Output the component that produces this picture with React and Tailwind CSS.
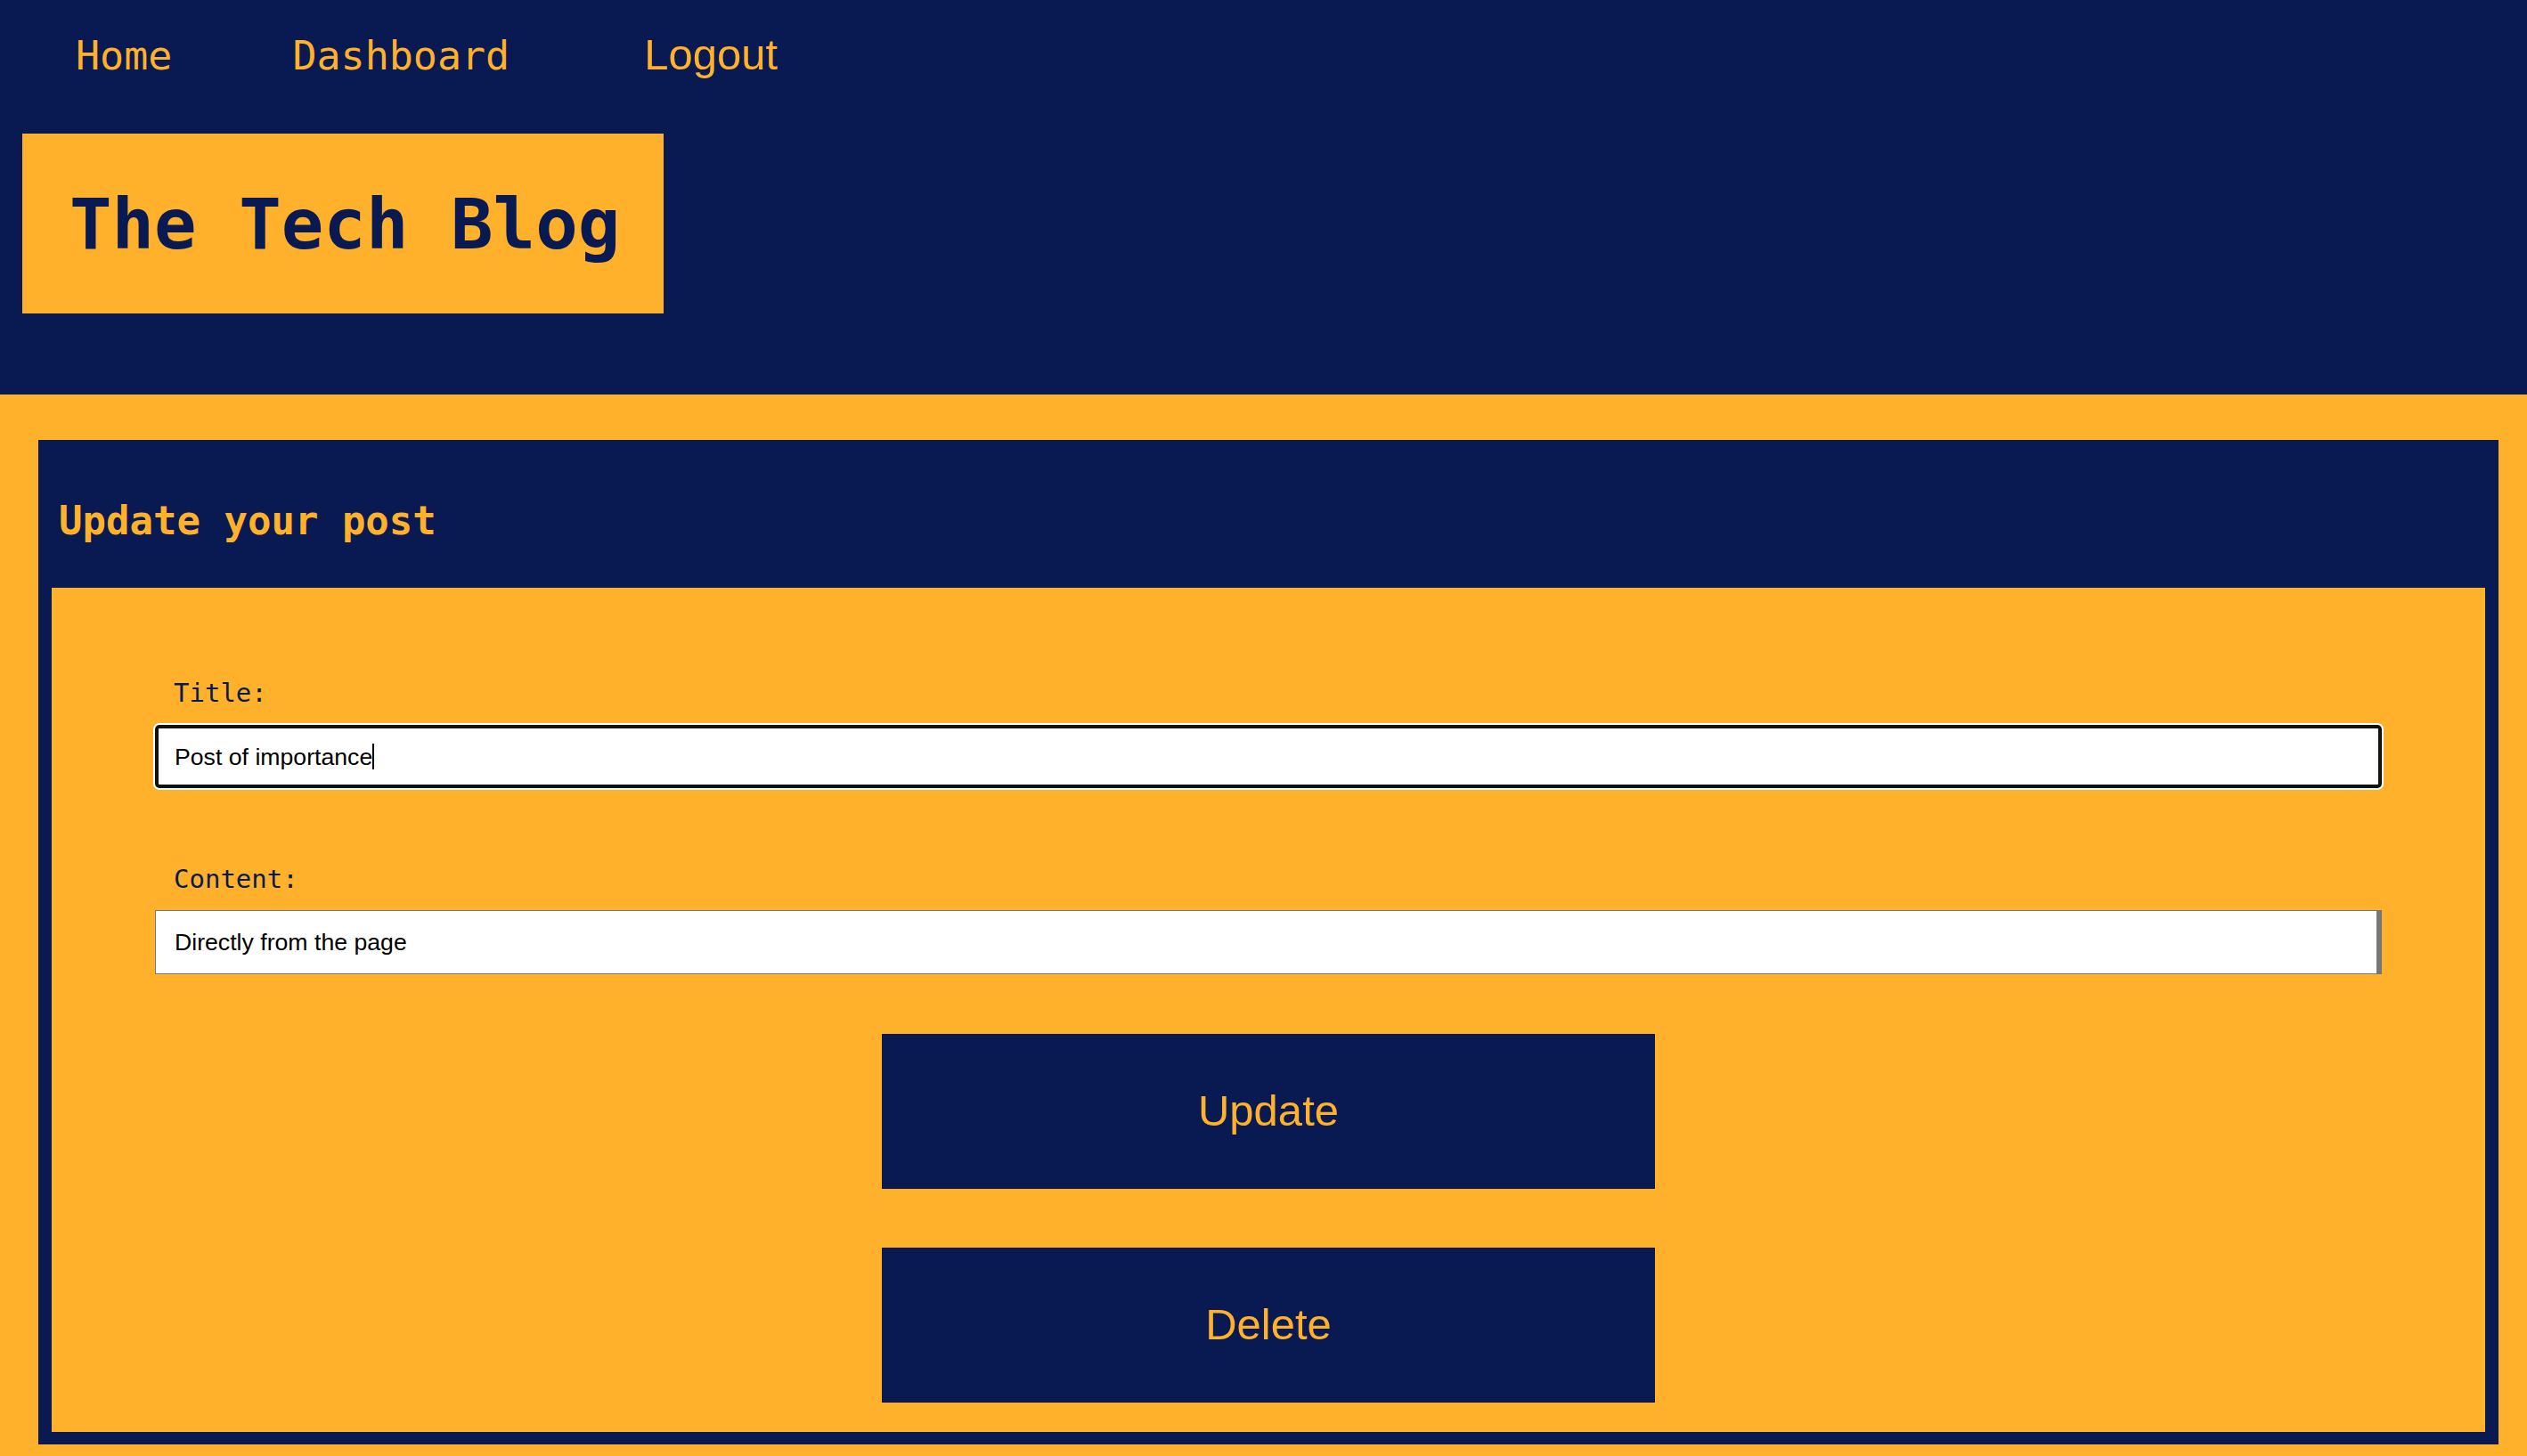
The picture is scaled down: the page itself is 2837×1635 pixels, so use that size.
import { useState } from 'react'

const mono = "font-['DejaVu_Sans_Mono',monospace]"
const sans = "font-['Liberation_Sans',Arial,sans-serif]"

export default function App() {
  const [title] = useState('Post of importance')
  const [content, setContent] = useState('Directly from the page')

  return (
    <div className="min-h-screen bg-[#ffb12c]">
      <header className="flex h-[443px] flex-col bg-[#081a51]">
        <nav className="flex h-[150px] items-baseline pl-[85px] pt-[37px]">
          <a href="#" className={`${mono} text-[45px] leading-[45px] text-[#ffb12c]`}>
            Home
          </a>
          <a href="#" className={`${mono} ml-[135px] text-[45px] leading-[45px] text-[#ffb12c]`}>
            Dashboard
          </a>
          <button className={`${sans} ml-[151px] text-[49px] leading-[49px] text-[#ffb12c]`}>
            Logout
          </button>
        </nav>
        <div className="ml-[25px] h-[202px] w-[720px] bg-[#ffb12c] pl-[53px] pt-[63px]">
          <h1 className={`${mono} text-[79px] font-bold leading-[79px] text-[#081a51]`}>
            The Tech Blog
          </h1>
        </div>
      </header>

      <main className="pb-[13px] pt-[51px]">
        <section className="ml-[43px] mr-[32px] bg-[#081a51] px-[15px] pb-[14px]">
          <h2 className={`${mono} pb-[53px] pl-[8px] pt-[69px] text-[44px] font-bold leading-[44px] text-[#ffb12c]`}>
            Update your post
          </h2>

          <form className="flex flex-col bg-[#ffb12c] px-[116px] pb-[33px] pt-[104px]">
            <label className={`${mono} pl-[21px] text-[29px] leading-[29px] text-[#081a51]`}>
              Title:
            </label>
            <div className={`${sans} mt-[21px] flex h-[71px] items-center rounded-[5px] border-[4px] border-[#111111] bg-white pl-[18px] text-[26.67px] text-black shadow-[0_0_0_2px_#ffffff]`}>
              <span>{title}</span>
              <span className="inline-block h-[29px] w-[2px] bg-black" />
            </div>

            <label className={`${mono} mt-[88px] pl-[21px] text-[29px] leading-[29px] text-[#081a51]`}>
              Content:
            </label>
            <input
              value={content}
              onChange={(e) => setContent(e.target.value)}
              className={`${sans} mt-[20px] h-[72px] border border-r-[6px] border-[#767676] bg-white pl-[21px] text-[26.67px] text-black outline-none`}
            />

            <button
              type="button"
              className={`${sans} mt-[67px] flex h-[174px] w-[868px] items-center justify-center self-center bg-[#081a51] text-[49px] text-[#ffb12c]`}
            >
              Update
            </button>
            <button
              type="button"
              className={`${sans} mt-[66px] flex h-[174px] w-[868px] items-center justify-center self-center bg-[#081a51] text-[49px] text-[#ffb12c]`}
            >
              Delete
            </button>
          </form>
        </section>
      </main>
    </div>
  )
}
